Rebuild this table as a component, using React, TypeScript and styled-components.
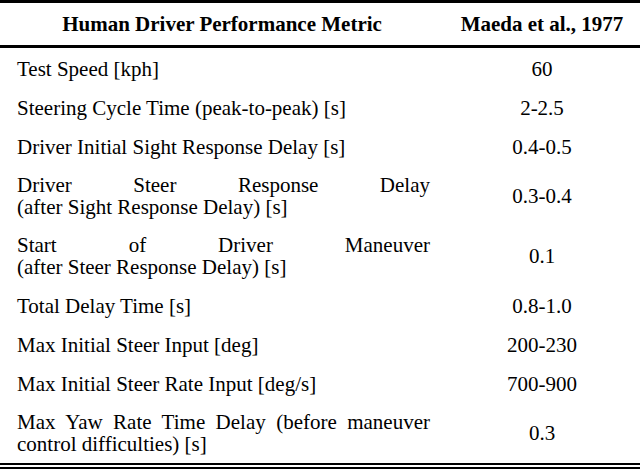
import styled, { createGlobalStyle } from "styled-components";

const GlobalStyle = createGlobalStyle`
  body {
    margin: 0;
    background: #ffffff;
  }
`;

const Table = styled.div`
  width: 640px;
  font-family: "Liberation Serif", "Times New Roman", serif;
  font-size: 21px;
  line-height: 22px;
  color: #000;
  border-top: 3px solid #000;
`;

const HeaderRow = styled.div`
  display: grid;
  grid-template-columns: 444px 1fr;
  height: 42px;
  align-items: center;
  border-bottom: 3px solid #000;
  font-weight: bold;
  text-align: center;
`;

const Body = styled.div`
  padding-top: 1px;
  border-bottom: 6px double #000;
`;

const Row = styled.div<{ $tall?: boolean }>`
  display: grid;
  grid-template-columns: 444px 1fr;
  align-items: center;
  height: ${(p) => (p.$tall ? "60px" : "39px")};
`;

const Label = styled.div`
  padding: 0 14px 0 17px;
`;

const Line = styled.span<{ $justify?: boolean }>`
  display: block;
  text-align: ${(p) => (p.$justify ? "justify" : "left")};
  text-align-last: ${(p) => (p.$justify ? "justify" : "left")};
`;

const Value = styled.div`
  text-align: center;
`;

type Item = { label: string[]; value: string };

const rows: Item[] = [
  { label: ["Test Speed [kph]"], value: "60" },
  { label: ["Steering Cycle Time (peak-to-peak) [s]"], value: "2-2.5" },
  { label: ["Driver Initial Sight Response Delay [s]"], value: "0.4-0.5" },
  {
    label: ["Driver Steer Response Delay", "(after Sight Response Delay) [s]"],
    value: "0.3-0.4",
  },
  {
    label: ["Start of Driver Maneuver", "(after Steer Response Delay) [s]"],
    value: "0.1",
  },
  { label: ["Total Delay Time [s]"], value: "0.8-1.0" },
  { label: ["Max Initial Steer Input [deg]"], value: "200-230" },
  { label: ["Max Initial Steer Rate Input [deg/s]"], value: "700-900" },
  {
    label: [
      "Max Yaw Rate Time Delay (before maneuver",
      "control difficulties) [s]",
    ],
    value: "0.3",
  },
];

const App: React.FC = () => {
  return (
    <>
      <GlobalStyle />
      <Table>
        <HeaderRow>
          <div>Human Driver Performance Metric</div>
          <div>Maeda et al., 1977</div>
        </HeaderRow>
        <Body>
          {rows.map((r) => (
            <Row key={r.label[0]} $tall={r.label.length > 1}>
              <Label>
                {r.label.map((l, i) => (
                  <Line key={l} $justify={r.label.length > 1 && i === 0}>
                    {l}
                  </Line>
                ))}
              </Label>
              <Value>{r.value}</Value>
            </Row>
          ))}
        </Body>
      </Table>
    </>
  );
};

export default App;
